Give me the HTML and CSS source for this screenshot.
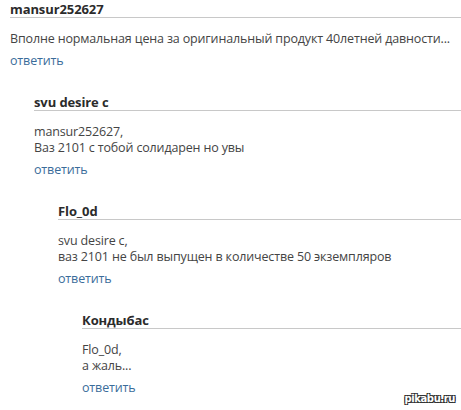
FILE: index.html
```html
<!DOCTYPE html>
<html lang="ru">
<head>
    <meta charset="UTF-8">
    <meta name="viewport" content="width=device-width, initial-scale=1.0">
    <title>Комментарии</title>
    <link rel="stylesheet" href="styles.css">
</head>
<body>
    <div class="comments">
        <div class="comment">
            <div class="comment-head">mansur252627</div>
            <div class="comment-body">Вполне нормальная цена за оригинальный продукт 40летней давности...</div>
            <a class="reply" href="#">ответить</a>

            <div class="comment child">
                <div class="comment-head">svu desire c</div>
                <div class="comment-body">mansur252627,<br>Ваз 2101 с тобой солидарен но увы</div>
                <a class="reply" href="#">ответить</a>

                <div class="comment child">
                    <div class="comment-head">Flo_0d</div>
                    <div class="comment-body">svu desire c,<br>ваз 2101 не был выпущен в количестве 50 экземпляров</div>
                    <a class="reply" href="#">ответить</a>

                    <div class="comment child">
                        <div class="comment-head">Кондыбас</div>
                        <div class="comment-body">Flo_0d,<br>а жаль...</div>
                        <a class="reply" href="#">ответить</a>
                    </div>
                </div>
            </div>
        </div>
    </div>
    <span class="watermark">pikabu.ru</span>
</body>
</html>
```

FILE: styles.css
```css
body {
    font-family: "Open Sans", Arial, sans-serif;
    font-size: 12.5px;
    letter-spacing: -0.15px;
    background-color: #fff;
    color: #444;
    margin: 0;
    padding: 2px 0 0 10px;
    height: 408px;
    overflow: hidden;
    position: relative;
}
.comment-head {
    font-weight: bold;
    font-size: 13px;
    letter-spacing: -0.1px;
    color: #2b2b2b;
    line-height: 15px;
    border-bottom: 1px solid #c8c8c8;
}
.comment-body {
    margin-top: 13px;
    line-height: 16px;
    white-space: nowrap;
}
.reply {
    display: block;
    margin-top: 6px;
    line-height: 16px;
    color: #3a6c9a;
    text-decoration: none;
}
.child {
    margin-left: 24px;
    margin-top: 26px;
}
.watermark {
    position: absolute;
    right: 6px;
    bottom: 5px;
    font-family: "DejaVu Sans", sans-serif;
    font-size: 10px;
    letter-spacing: -0.4px;
    font-weight: bold;
    line-height: 12px;
    color: #fff;
    text-shadow: -1px -1px 0 #333, 1px -1px 0 #333, -1px 1px 0 #333, 1px 1px 0 #333;
}
```
